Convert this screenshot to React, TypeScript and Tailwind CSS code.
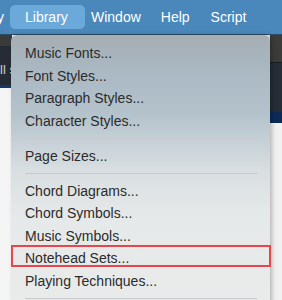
import React from "react";

const font = { fontFamily: '"Liberation Sans", Arial, sans-serif' };

type Entry = { label: string } | { sep: true };

const entries: Entry[] = [
  { label: "Music Fonts..." },
  { label: "Font Styles..." },
  { label: "Paragraph Styles..." },
  { label: "Character Styles..." },
  { sep: true },
  { label: "Page Sizes..." },
  { sep: true },
  { label: "Chord Diagrams..." },
  { label: "Chord Symbols..." },
  { label: "Music Symbols..." },
  { label: "Notehead Sets..." },
  { label: "Playing Techniques..." },
  { sep: true },
];

export default function App() {
  return (
    <div className="relative w-[282px] h-[300px] overflow-hidden bg-[#f2f2f2]" style={font}>
      {/* Menu bar */}
      <div className="h-[35px] bg-[#4a88bb] border-b border-[#2d4a63] flex items-center text-white text-[14px]">
        <span className="ml-[-3px] w-[10px]">y</span>
        <div className="ml-[3px] h-[24px] w-[75px] rounded-[5px] bg-[#6aa9d9] flex items-center pl-[15px]">Library</div>
        <span className="ml-[6px]">Window</span>
        <span className="ml-[20px]">Help</span>
        <span className="ml-[21px]">Script</span>
      </div>

      {/* App background behind menu */}
      <div className="flex h-[265px]">
        <div className="w-[12px] flex flex-col">
          <div className="h-[11px] bg-[#3a3a3a]" />
          <div className="h-[39px] bg-[#252c36] text-[#c9ccd1] text-[13px] leading-[39px] overflow-hidden whitespace-nowrap pt-[4px]">ll s</div>
          <div className="h-[3px] bg-[#173a6c]" />
          <div className="flex-1 bg-[#f5f5f5]" />
        </div>
        <div className="flex-1" />
        <div className="w-[12px] flex flex-col">
          <div className="h-[27px] bg-[#3b3b39]" />
          <div className="h-[1px] bg-[#1a1d22]" />
          <div className="h-[49px] bg-[#262d37]" />
          <div className="h-[11px] bg-[#0d2a57]" />
          <div className="flex-1 bg-[#f1f1f1]" />
        </div>
      </div>

      {/* Dropdown menu */}
      <div
        className="absolute left-[11px] top-[35px] w-[259px] h-[280px] rounded-t-[6px] pt-[7px] shadow-[2px_0_4px_rgba(0,0,0,0.25)] text-[14px] text-[#2b2b2b]"
        style={{
          background:
            "linear-gradient(180deg, #a5aeb3 0%, #aab9c3 14%, #b3c2cb 28%, #d8dee1 48%, #e6e9e9 65%, #eaebeb 100%)",
        }}
      >
        {entries.map((e, i) =>
          "sep" in e ? (
            <div key={i} className="h-[12.5px] flex items-center pl-[14px] pr-[13px]">
              <div className="h-[1px] w-full bg-[#c6cacc]" />
            </div>
          ) : (
            <div key={i} className="relative h-[22.5px] leading-[22.5px] pl-[14px] whitespace-nowrap">
              {e.label}
              {e.label === "Notehead Sets..." && (
                <div className="absolute left-0 right-[-1px] top-[-2px] h-[22px] border-2 border-[#e4474c]" />
              )}
            </div>
          )
        )}
      </div>
    </div>
  );
}
